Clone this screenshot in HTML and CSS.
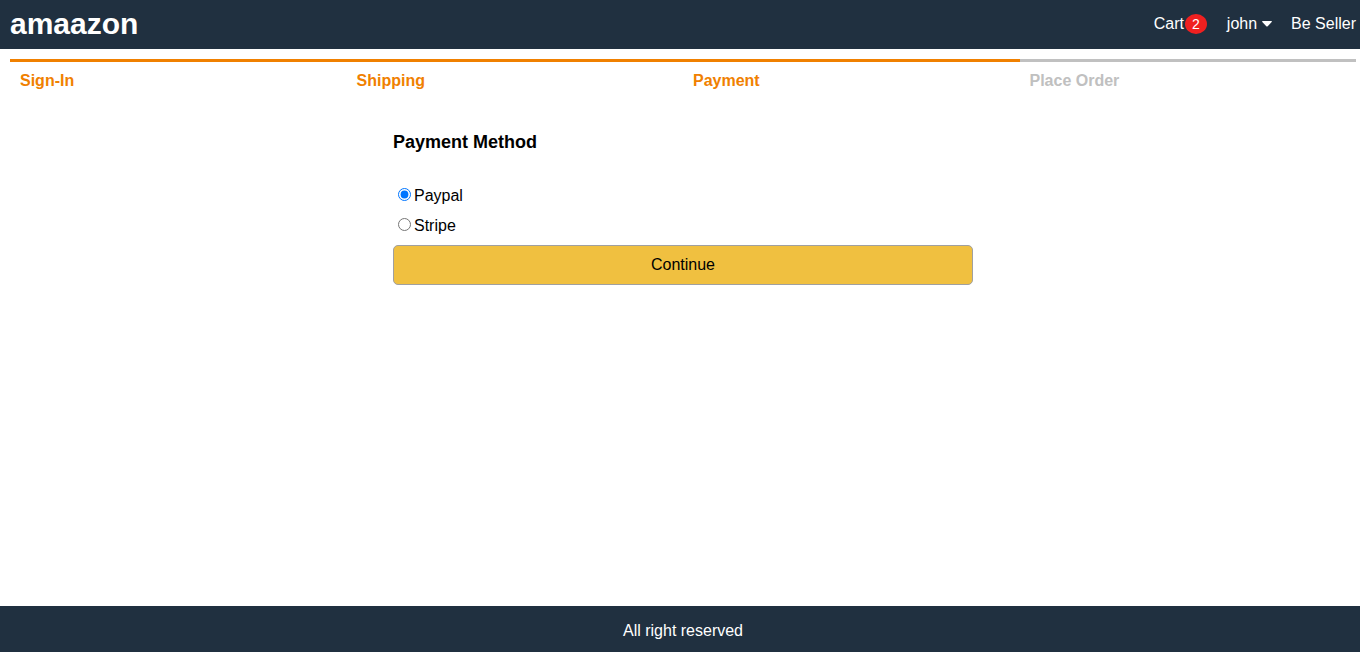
FILE: index.html
```html
<!DOCTYPE html>
<html lang="en">
<head>
<meta charset="utf-8">
<meta name="viewport" content="width=device-width, initial-scale=1">
<title>amaazon</title>
<link rel="stylesheet" href="styles.css">
</head>
<body>
<div class="page">
  <header class="header">
    <a class="brand" href="#">amaazon</a>
    <nav class="nav">
      <a class="nav-link" href="#">Cart<span class="badge">2</span></a>
      <a class="nav-link" href="#">john
        <svg class="caret" viewBox="0 0 10 6" aria-hidden="true"><path d="M0.8 0H9.2Q10.4 0.2 9.7 1.1L5.7 5.2Q5 5.8 4.3 5.2L0.3 1.1Q-0.4 0.2 0.8 0Z"/></svg>
      </a>
      <a class="nav-link" href="#">Be Seller</a>
    </nav>
  </header>
  <main class="main">
    <ol class="steps">
      <li class="step active">Sign-In</li>
      <li class="step active">Shipping</li>
      <li class="step active">Payment</li>
      <li class="step">Place Order</li>
    </ol>
    <form class="form">
      <h1 class="title">Payment Method</h1>
      <div class="option">
        <input class="radio" type="radio" id="paypal" name="method" value="paypal" checked>
        <label for="paypal">Paypal</label>
      </div>
      <div class="option">
        <input class="radio" type="radio" id="stripe" name="method" value="stripe">
        <label for="stripe">Stripe</label>
      </div>
      <button class="primary" type="submit">Continue</button>
    </form>
  </main>
  <footer class="footer">All right reserved</footer>
</div>
</body>
</html>
```
FILE: styles.css
```css
* {
  box-sizing: border-box;
}

body {
  margin: 0;
  color: #000000;
  background: #ffffff;
  font: 16px/20px "Liberation Sans", Arial, Helvetica, sans-serif;
}

.page {
  display: flex;
  flex-direction: column;
  min-height: 100vh;
}

.header {
  display: flex;
  align-items: center;
  justify-content: space-between;
  padding: 7px 4px 8px 10px;
  background: #203040;
}

.brand {
  color: #ffffff;
  font-size: 30px;
  font-weight: bold;
  line-height: 34px;
  text-decoration: none;
}

.nav {
  display: flex;
  align-items: center;
  gap: 19px;
}

.nav-link {
  display: flex;
  align-items: center;
  color: #ffffff;
  text-decoration: none;
}

.badge {
  padding: 2px 7px;
  margin: 0 1px;
  border-radius: 50%;
  background: #f02020;
  font-size: 14px;
  line-height: 16px;
}

.caret {
  width: 10px;
  height: 6px;
  margin-left: 5px;
  fill: #ffffff;
}

.main {
  flex: 1;
  padding: 10px 4px 10px 10px;
}

.steps {
  display: flex;
  margin: 0;
  padding: 0;
  list-style: none;
}

.step {
  flex: 1;
  padding: 9px 10px 0;
  border-top: 3px solid #c0c0c0;
  color: #c0c0c0;
  font-weight: bold;
}

.active {
  border-top-color: #f08000;
  color: #f08000;
}

.form {
  display: flex;
  flex-direction: column;
  gap: 8px;
  max-width: 580px;
  margin: 0 auto;
}

.title {
  margin: 41px 0 25px;
  font-size: 18px;
  line-height: 20px;
}

.option {
  display: flex;
  align-items: center;
  line-height: 22px;
}

.radio {
  width: 13px;
  height: 13px;
  margin: 0 3px 4px 5px;
}

.primary {
  padding: 9px;
  border: 1px solid #a0a0a0;
  border-radius: 5px;
  color: #000000;
  background: #f0c040;
  font: inherit;
  cursor: pointer;
}

.footer {
  padding: 15px 4px 11px 10px;
  color: #ffffff;
  background: #203040;
  text-align: center;
}
```
